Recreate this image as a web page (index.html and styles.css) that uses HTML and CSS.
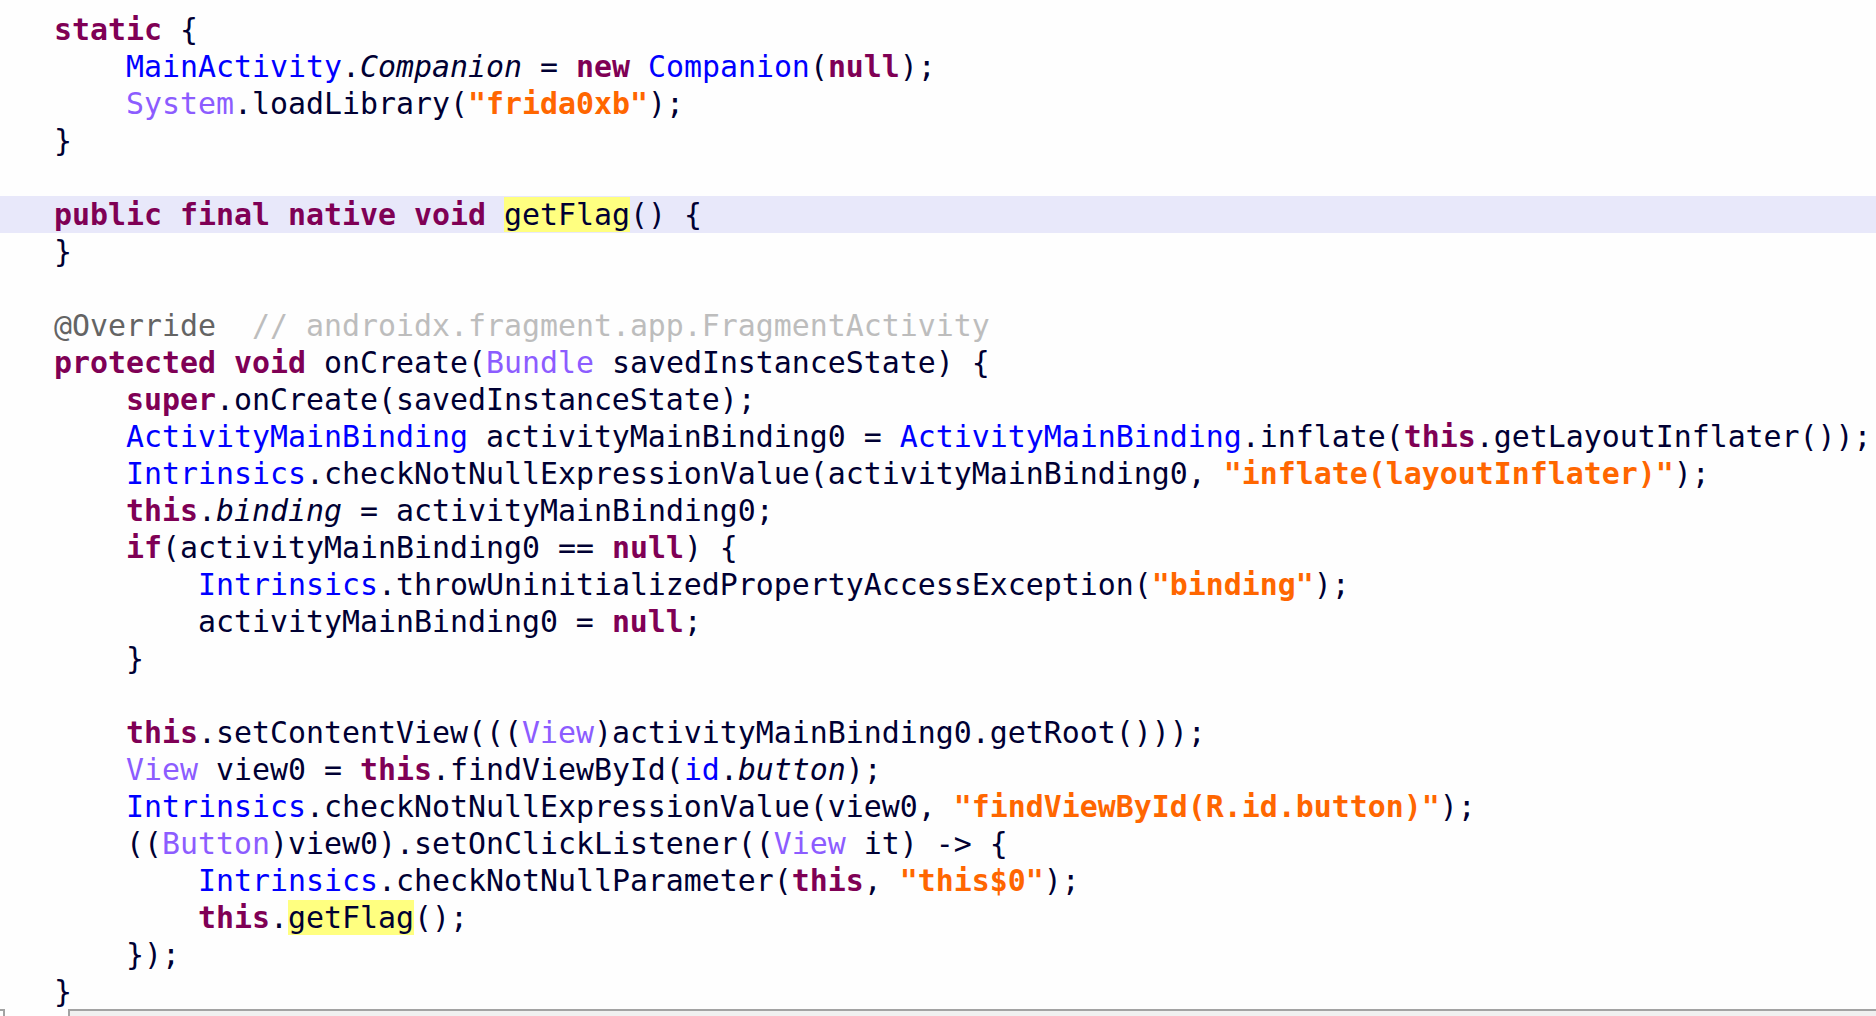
FILE: index.html
```html
<!DOCTYPE html>
<html lang="en">
<head>
    <meta charset="UTF-8">
    <title>MainActivity.java</title>
    <link rel="stylesheet" href="styles.css">
</head>
<body>
    <div class="editor">
        <div class="line"><span class="kw">static</span> {</div>
        <div class="line">    <span class="cls">MainActivity</span>.<i>Companion</i> = <span class="kw">new</span> <span class="cls">Companion</span>(<span class="kw">null</span>);</div>
        <div class="line">    <span class="sys">System</span>.loadLibrary(<span class="str">"frida0xb"</span>);</div>
        <div class="line">}</div>
        <div class="line"></div>
        <div class="line current"><span class="kw">public final native void</span> <span class="mark">getFlag</span>() {</div>
        <div class="line">}</div>
        <div class="line"></div>
        <div class="line"><span class="ann">@Override</span>  <span class="cmt">// androidx.fragment.app.FragmentActivity</span></div>
        <div class="line"><span class="kw">protected void</span> onCreate(<span class="sys">Bundle</span> savedInstanceState) {</div>
        <div class="line">    <span class="kw">super</span>.onCreate(savedInstanceState);</div>
        <div class="line">    <span class="cls">ActivityMainBinding</span> activityMainBinding0 = <span class="cls">ActivityMainBinding</span>.inflate(<span class="kw">this</span>.getLayoutInflater());</div>
        <div class="line">    <span class="cls">Intrinsics</span>.checkNotNullExpressionValue(activityMainBinding0, <span class="str">"inflate(layoutInflater)"</span>);</div>
        <div class="line">    <span class="kw">this</span>.<i>binding</i> = activityMainBinding0;</div>
        <div class="line">    <span class="kw">if</span>(activityMainBinding0 == <span class="kw">null</span>) {</div>
        <div class="line">        <span class="cls">Intrinsics</span>.throwUninitializedPropertyAccessException(<span class="str">"binding"</span>);</div>
        <div class="line">        activityMainBinding0 = <span class="kw">null</span>;</div>
        <div class="line">    }</div>
        <div class="line"></div>
        <div class="line">    <span class="kw">this</span>.setContentView(((<span class="sys">View</span>)activityMainBinding0.getRoot()));</div>
        <div class="line">    <span class="sys">View</span> view0 = <span class="kw">this</span>.findViewById(<span class="cls">id</span>.<i>button</i>);</div>
        <div class="line">    <span class="cls">Intrinsics</span>.checkNotNullExpressionValue(view0, <span class="str">"findViewById(R.id.button)"</span>);</div>
        <div class="line">    ((<span class="sys">Button</span>)view0).setOnClickListener((<span class="sys">View</span> it) -&gt; {</div>
        <div class="line">        <span class="cls">Intrinsics</span>.checkNotNullParameter(<span class="kw">this</span>, <span class="str">"this$0"</span>);</div>
        <div class="line">        <span class="kw">this</span>.<span class="mark">getFlag</span>();</div>
        <div class="line">    });</div>
        <div class="line">}</div>
    </div>

    <!-- horizontal scroll bar -->
    <div class="hscroll">
        <div class="hscroll-corner"></div>
        <div class="hscroll-track"></div>
    </div>
</body>
</html>
```

FILE: styles.css
```css
/* Code view, Eclipse-like colours */
body {
    margin: 0;
    background: #fefefe;
    display: flex;
    flex-direction: column;
    height: 100vh;
    overflow: hidden;
}

.editor {
    flex: 1;
    min-height: 0;
    overflow: hidden;
    padding-top: 11px;
    font-family: 'DejaVu Sans Mono', 'Liberation Mono', monospace;
    font-size: 29.9px;
    color: #000033;
}

.line {
    height: 37px;
    line-height: 37px;
    padding-left: 54px;
    white-space: pre;
}

.current {
    background-color: #e8e8fa;
}

.kw {
    color: #7f0055;
    font-weight: bold;
}

.cls {
    color: #0000ff;
}

.sys {
    color: #8c5cff;
}

.str {
    color: #ff6600;
    font-weight: bold;
}

.ann {
    color: #646464;
}

.cmt {
    color: #bdbdbd;
}

.mark {
    background-color: #ffff80;
}

i {
    font-style: italic;
}

.hscroll {
    height: 7px;
    display: flex;
}

.hscroll-corner {
    width: 3px;
    border-top: 2px solid #a3a3a3;
    border-right: 2px solid #a3a3a3;
}

.hscroll-track {
    flex: 1;
    margin-left: 63px;
    background: #f0f0f0;
    border-top: 2px solid #a3a3a3;
    border-left: 2px solid #a3a3a3;
}
```
